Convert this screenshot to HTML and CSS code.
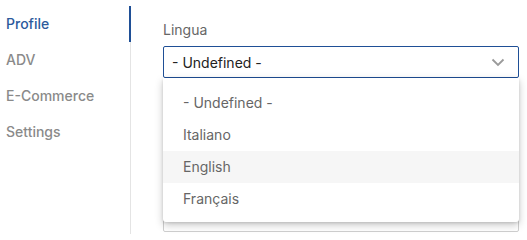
FILE: index.html
```html
<!DOCTYPE html>
<html>
<head>
<meta charset="utf-8">
<link rel="stylesheet" href="styles.css">
</head>
<body>
<div class="page">
  <nav class="sidebar">
    <a class="nav-item active">Profile</a>
    <a class="nav-item">ADV</a>
    <a class="nav-item">E-Commerce</a>
    <a class="nav-item">Settings</a>
  </nav>
  <main class="content">
    <div class="field">
      <label class="label">Lingua</label>
      <div class="select-wrap">
        <div class="select">
          <span>- Undefined -</span>
          <svg class="chevron" width="14" height="9" viewBox="0 0 14 9"><path d="M1.5 1.5 L7 7 L12.5 1.5" fill="none" stroke="#9a9a9a" stroke-width="1.8"/></svg>
        </div>
        <ul class="menu">
          <li class="option">- Undefined -</li>
          <li class="option">Italiano</li>
          <li class="option hover">English</li>
          <li class="option">Français</li>
        </ul>
      </div>
    </div>
    <div class="field next">
      <div class="input"></div>
    </div>
  </main>
</div>
</body>
</html>
```
FILE: styles.css
```css
* { box-sizing: border-box; }
html, body { margin: 0; padding: 0; background: #fff; }
body { font-family: Inter, "Noto Sans", sans-serif; width: 527px; height: 234px; overflow: hidden; }
.page { display: flex; height: 234px; padding-top: 6px; }
.sidebar {
  width: 131px;
  flex-shrink: 0;
  border-right: 1px solid #e4e4e4;
  display: flex;
  flex-direction: column;
}
.nav-item {
  display: block;
  height: 36px;
  line-height: 36px;
  padding-left: 6px;
  font-size: 14px;
  font-weight: 500;
  color: #8a8a8a;
  margin-right: -1px;
}
.nav-item.active {
  color: #2c5a9c;
  border-right: 2px solid #1f4f96;
}
.content { flex: 1; padding: 15px 8px 0 32px; display: flex; flex-direction: column; }
.label { display: block; font-size: 14px; color: #666; line-height: 18px; margin-bottom: 7px; }
.select-wrap { position: relative; }
.select {
  height: 32px;
  border: 1px solid #1f4f96;
  border-radius: 2px;
  display: flex;
  align-items: center;
  justify-content: space-between;
  padding: 0 13px 0 8px;
  font-size: 14px;
  color: #222;
}
.chevron { display: block; }
.menu {
  position: absolute;
  left: 0; right: 0; top: 32px;
  margin: 0; padding: 9px 0 7px;
  list-style: none;
  background: #fff;
  border-radius: 0 0 3px 3px;
  box-shadow: 0 3px 8px rgba(0,0,0,0.22), 0 1px 3px rgba(0,0,0,0.12);
  z-index: 2;
}
.option {
  height: 32px;
  line-height: 32px;
  padding-left: 20px;
  font-size: 14px;
  color: #666;
}
.option.hover { background: #f6f6f6; }
.next { margin-top: 14px; }
.input { height: 140px; border: 1px solid #cfcfcf; border-radius: 2px; }
```
